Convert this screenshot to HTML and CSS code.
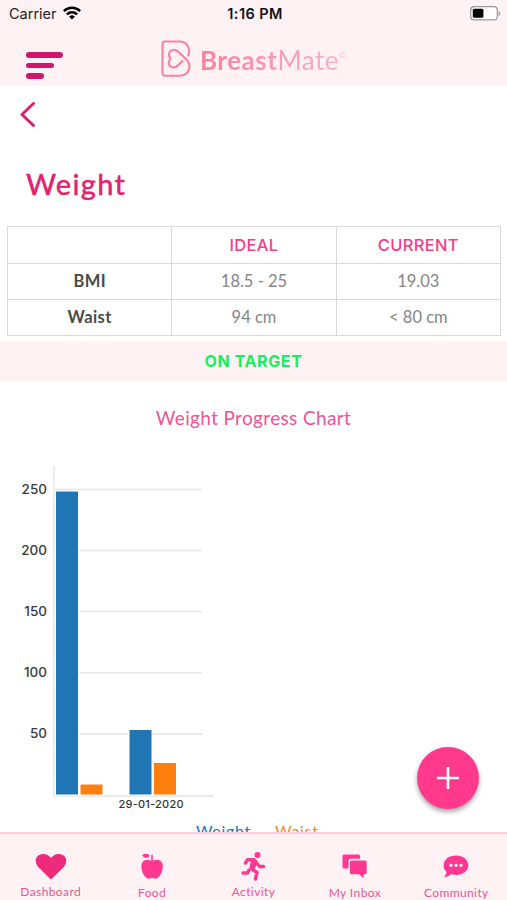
FILE: index.html
```html
<!DOCTYPE html>
<html lang="en">
<head>
    <meta charset="UTF-8">
    <meta name="viewport" content="width=device-width, initial-scale=1.0">
    <title>BreastMate - Weight</title>
    <link rel="stylesheet" href="styles.css">
</head>
<body>
    <header>
        <div class="status-bar">
            <div class="carrier">
                <span>Carrier</span>
                <svg width="18" height="14" viewBox="0 0 18 14" fill="none" stroke="#000" stroke-width="2.5">
                    <path d="M.9 5.1a11.6 11.6 0 0 1 16.2 0M3.9 8.3a7.3 7.3 0 0 1 10.2 0"/>
                    <path d="M9 13.6 6.1 10.7a4.2 4.2 0 0 1 5.8 0z" fill="#000" stroke="none"/>
                </svg>
            </div>
            <span class="time">1:16 PM</span>
            <svg class="battery" width="31" height="15" viewBox="0 0 31 15">
                <rect x=".7" y=".7" width="26.6" height="13.2" rx="3.5" fill="#fff" stroke="#9b9598" stroke-width="1.2"/>
                <rect x="2.8" y="2.8" width="10.6" height="9" rx="1.5"/>
                <path d="M28.6 5v5q1.6-.8 1.6-2.5t-1.6-2.5z" fill="#9b9598"/>
            </svg>
        </div>
        <div class="navbar">
            <div class="menu">
                <span></span>
                <span></span>
                <span></span>
            </div>
            <div class="logo">
                <svg width="30" height="38" viewBox="0 0 30 38" fill="none" stroke="#f9819f" stroke-width="2.1" stroke-linecap="round" stroke-linejoin="round">
                    <path d="M27.3 15.5C30 8 25.500 1.500 18.500 1.500H4Q1.500 1.500 1.500 4V33Q1.500 35.700 4 35.700H18.500C28 35.700 31.500 25.500 25.500 19.500L17.500 12C14 8 8 10 8 15C8 16.500 9 17.500 9.700 18.500C6 22 8 28 13 27.500C16 27.200 19 23.500 21.500 21"/>
                </svg>
                <span class="logo-text"><b>Breast</b>Mate<sup>©</sup></span>
            </div>
        </div>
    </header>

    <main>
        <svg class="back" width="16" height="26" viewBox="0 0 16 26" fill="none" stroke="#dc2071" stroke-width="3" stroke-linecap="round" stroke-linejoin="round">
            <path d="M13.5 2.500 2 13.500 13.500 24.500"/>
        </svg>
        <h1>Weight</h1>
        <table>
            <tr><th></th><th>IDEAL</th><th>CURRENT</th></tr>
            <tr><td class="label">BMI</td><td>18.5 - 25</td><td>19.03</td></tr>
            <tr><td class="label">Waist</td><td>94 cm</td><td>&lt; 80 cm</td></tr>
        </table>
        <div class="target">ON TARGET</div>
        <h2>Weight Progress Chart</h2>

        <svg class="chart" width="230" height="360" viewBox="0 0 230 360">
            <g class="grid">
                <path d="M54 39.500H202M54 100.500H202M54 161.500H202M54 223H202M54 284H202"/>
                <path d="M54 16V346H213"/>
            </g>
            <g class="bars">
                <rect x="55.500" y="41" width="23" height="304" fill="#2076b4"/>
                <rect x="80" y="334" width="23" height="11" fill="#ff7f0e"/>
                <rect x="129" y="279.500" width="23" height="65.500" fill="#2076b4"/>
                <rect x="153.500" y="312.500" width="23" height="32.500" fill="#ff7f0e"/>
            </g>
            <g class="values">
                <text x="47" y="43.500">250</text>
                <text x="47" y="104.500">200</text>
                <text x="47" y="166">150</text>
                <text x="47" y="227">100</text>
                <text x="47" y="288">50</text>
            </g>
            <text class="date" x="151" y="358" textLength="65">29-01-2020</text>
        </svg>
        <div class="legend">
            <span class="weight">Weight</span>
            <span class="waist">Waist</span>
        </div>
    </main>

    <button class="add" aria-label="Add">
        <svg width="24" height="24" viewBox="0 0 24 24" stroke="#fff" stroke-width="2.600"><path d="M12 1V23M1 12H23"/></svg>
    </button>

    <nav>
        <a class="active">
            <svg width="32" height="30" viewBox="0 0 32 30"><path d="M16 28.500 3.400 16.200C-.4 12-.1 6.500 3.800 4.200 8 1.800 13 3 16 7c3-4 8-5.200 12.200-2.800 3.900 2.300 4.200 7.800.4 12z"/></svg>
            <span>Dashboard</span>
        </a>
        <a>
            <svg width="32" height="30" viewBox="0 0 32 30"><path d="M16.800 9.700c4-2 8.700-.9 9.800 3.300 1.200 5.500-2.600 14.700-7.400 14.700-1 0-2-.6-3.100-.6s-2.100.6-3.100.6c-4.800 0-8.600-9.200-7.400-14.700 1.100-4.200 5.700-5.300 9.600-3.300-.1-2-.1-4 .1-6h1.500zM6.200 4.200c2.800-2.200 6.100-1.900 7.800.6-2.200 2.700-5.700 2.700-7.800-.6z"/></svg>
            <span class="low">Food</span>
        </a>
        <a>
            <svg width="32" height="30" viewBox="0 0 32 30">
                <circle cx="20.500" cy="4" r="3"/>
                <g fill="none" stroke="#ff3992" stroke-linecap="round" stroke-linejoin="round">
                    <path stroke-width="3.400" d="M8.500 12 10.500 8.700 16.500 8.700 20 12.500 22.500 15.500 26.500 15.500M15 18 20 21.500 18.500 28M12 19 10.500 22 6 22"/>
                    <path stroke-width="6" d="M17 10.500 15.500 16"/>
                </g>
            </svg>
            <span>Activity</span>
        </a>
        <a>
            <svg width="32" height="30" viewBox="0 0 32 30">
                <path d="M5 3.500h14.500q1.500 0 1.500 1.500v2.800h-9q-2.500 0-2.500 2.500v7.200H5q-1.500 0-1.500-1.500V5Q3.500 3.500 5 3.500z"/>
                <path d="M12.500 9.500h13.500q1.700 0 1.700 1.700v10.500q0 1.600-1.700 1.600h-1.500v4l-4.500-4h-7.500q-1.600 0-1.600-1.600V11.200q0-1.700 1.600-1.700z"/>
            </svg>
            <span class="low">My Inbox</span>
        </a>
        <a>
            <svg width="32" height="30" viewBox="0 0 32 30">
                <path d="M16 4.500c7 0 12.300 4.200 12.300 9.800S23 24 16 24c-2 0-3.500-.3-5-.9-1.800 1.700-4.300 3-7.200 3.200 1.400-1.700 2.400-3.400 2.600-5.300-1.800-1.800-2.800-4.100-2.800-6.700C3.600 8.700 9 4.500 16 4.500z"/>
                <g fill="#fff2f5"><circle cx="11" cy="14.300" r="1.600"/><circle cx="16" cy="14.300" r="1.600"/><circle cx="21" cy="14.300" r="1.600"/></g>
            </svg>
            <span class="low">Community</span>
        </a>
    </nav>
</body>
</html>
```
FILE: styles.css
```css
* {
    box-sizing: border-box;
}
body {
    font-family: Lato, "Open Sans", sans-serif;
    margin: 0;
    height: 900px;
    display: flex;
    flex-direction: column;
    overflow: hidden;
    position: relative;
    background-color: #fff;
}
header {
    height: 86px;
    flex: none;
    background-color: #fff2f5;
}
.status-bar {
    height: 27px;
    padding: 0 6px 0 9px;
    display: grid;
    grid-template-columns: 1fr auto 1fr;
    align-items: center;
    font: 14.5px Inter, sans-serif;
    color: #222;
}
.carrier {
    display: flex;
    align-items: center;
    gap: 6px;
}
.carrier svg {
    margin-top: -2px;
}
.time {
    font-weight: 600;
    letter-spacing: 0.4px;
    color: #111;
}
.battery {
    justify-self: end;
    margin-top: -1px;
}
.navbar {
    height: 59px;
    padding: 13px 0 0 26px;
    display: flex;
}
.menu {
    width: 135px;
    padding-top: 12px;
    display: flex;
    flex-direction: column;
    gap: 5px;
}
.menu span {
    width: 37px;
    height: 5.5px;
    border-radius: 3px;
    background-color: #cf176b;
}
.menu span:nth-child(2) {
    width: 28px;
}
.menu span:nth-child(3) {
    width: 18px;
}
.logo {
    display: flex;
    gap: 9px;
}
.logo-text {
    font-size: 26px;
    line-height: 40px;
    letter-spacing: 0.5px;
    white-space: nowrap;
    color: transparent;
    background: linear-gradient(90deg, #f9819f, #fbb0ce);
    background-clip: text;
    -webkit-background-clip: text;
}
.logo-text sup {
    font-size: 8px;
    line-height: 0;
    vertical-align: 12px;
}
main {
    flex: 1;
    min-height: 0;
    overflow: hidden;
    display: flex;
    flex-direction: column;
}
.back {
    margin: 15px 0 0 20px;
    flex: none;
}
h1 {
    margin: 37px 0 0 26px;
    font: 500 29px/40px Lato, sans-serif;
    letter-spacing: 1.3px;
    color: #e2236f;
    -webkit-text-stroke: 0.3px #e2236f;
}
table {
    width: 494px;
    height: 109px;
    margin: 22px 0 0 7px;
    border-collapse: collapse;
    table-layout: fixed;
    font-size: 16.5px;
    color: #858585;
}
th,
td {
    height: 36px;
    padding: 0 0 1px;
    border: 1px solid #d9d9d9;
    text-align: center;
}
th {
    height: 37px;
    color: #f43d86;
    font: 500 16.5px Inter, sans-serif;
    letter-spacing: 0.3px;
}
.label {
    color: #4a4a4a;
    font-weight: bold;
    letter-spacing: 0.4px;
}
.target {
    height: 40px;
    margin-top: 5px;
    flex: none;
    background-color: #fff2f5;
    color: #13f258;
    font: 700 16px/40px Inter, sans-serif;
    letter-spacing: 0.6px;
    text-align: center;
}
h2 {
    margin: 21px 0 0;
    font: 400 19px/32px Lato, sans-serif;
    letter-spacing: 0.35px;
    text-align: center;
    color: #ee5492;
}
.chart {
    margin-top: 16px;
    flex: none;
}
.grid path {
    fill: none;
    stroke: #e4e4e4;
    stroke-width: 1.3px;
}
.bars rect {
    stroke: #fff;
    stroke-width: 1px;
}
.values text {
    font: 500 13.5px Inter, sans-serif;
    text-anchor: end;
    fill: #3b3b3b;
}
.date {
    font: 500 11px Inter, sans-serif;
    text-anchor: middle;
    fill: #333;
}
.legend {
    margin-top: 10px;
    padding-left: 196px;
    display: flex;
    gap: 24px;
    font-size: 16px;
    line-height: 22px;
    letter-spacing: 0.7px;
}
.weight {
    color: #2076b4;
}
.waist {
    color: #f08a2c;
}
.add {
    position: absolute;
    right: 28px;
    top: 747px;
    width: 62px;
    height: 62px;
    padding: 0;
    display: flex;
    align-items: center;
    justify-content: center;
    border: none;
    border-radius: 50%;
    background-color: #ff3a8d;
    box-shadow: 0 3px 5px rgba(0,0,0,0.35);
}
nav {
    height: 68px;
    flex: none;
    display: grid;
    grid-template-columns: repeat(5, 1fr);
    border-top: 2px solid #ffcbdc;
    background-color: #fff2f5;
}
nav a {
    padding-top: 17px;
    display: flex;
    flex-direction: column;
    align-items: center;
    font-size: 12px;
    letter-spacing: 0.4px;
    color: #ee5492;
}
nav svg {
    flex: none;
    fill: #ff3992;
}
nav span {
    margin-top: 3px;
    line-height: 16px;
}
nav .low {
    margin-top: 4px;
}
.active svg {
    fill: #ee2a7b;
}
```
